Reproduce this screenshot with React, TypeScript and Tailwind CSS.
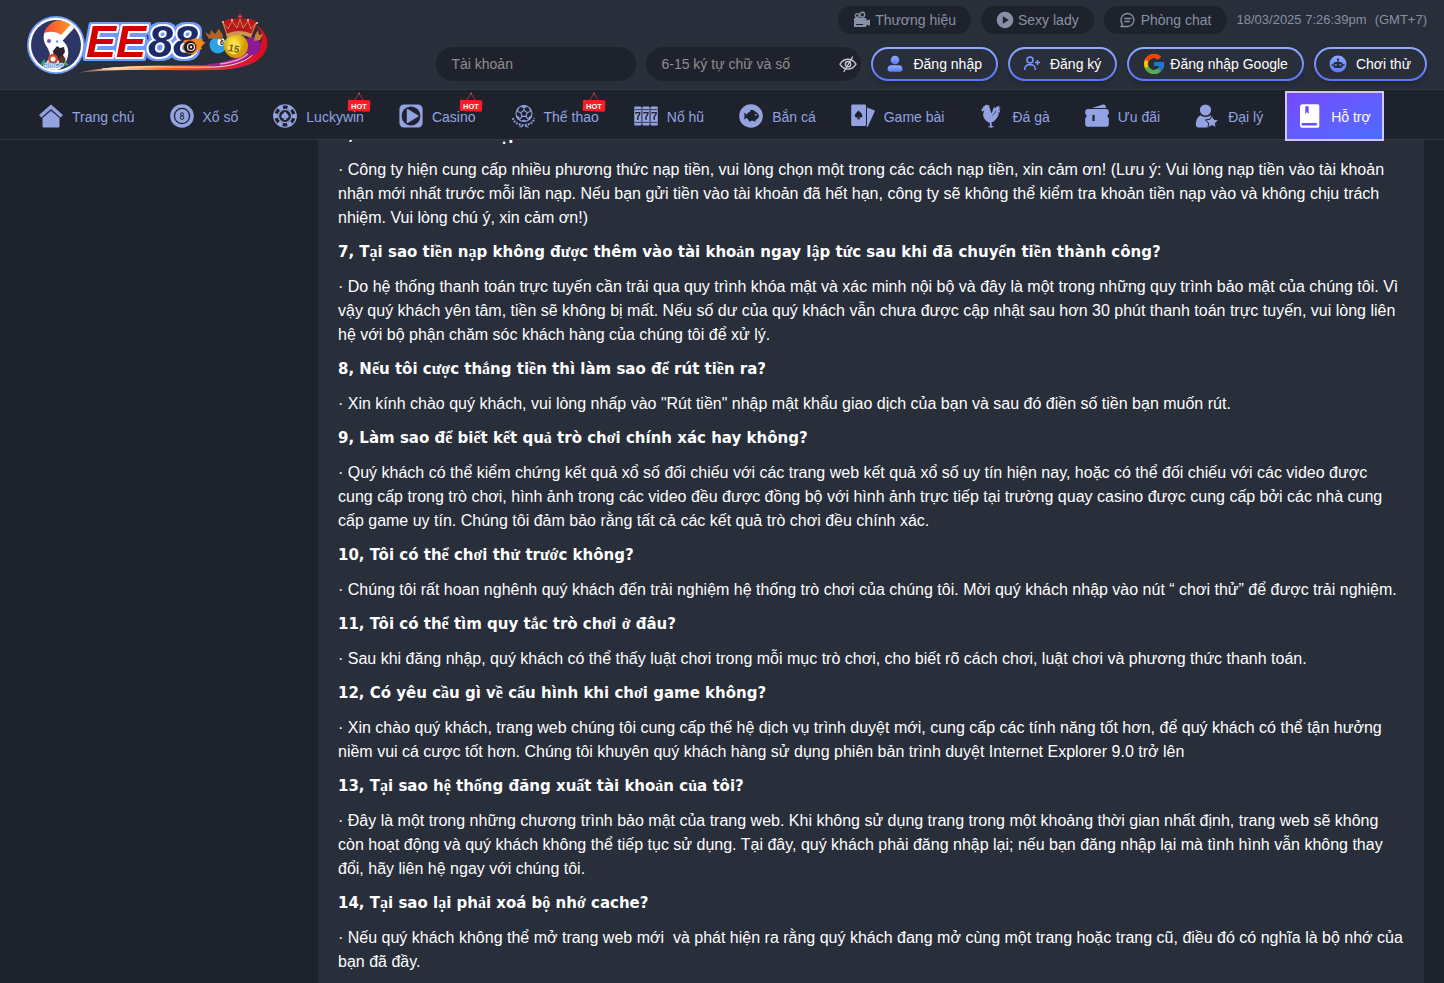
import React from "react";
import { FcGoogle } from "react-icons/fc";

type IconProps = { className?: string };

const HomeIcon = ({ className }: IconProps) => (
  <svg viewBox="0 0 24 24" className={className} fill="currentColor">
    <path d="M12 .8 23.6 11l-2 2.2L12 4.8l-9.6 8.4-2-2.2z" strokeLinejoin="round" stroke="currentColor" strokeWidth=".6" />
    <path d="M12 6.8 20.5 14v8.2a1.3 1.3 0 0 1-1.3 1.3H4.8a1.3 1.3 0 0 1-1.3-1.3V14z" />
  </svg>
);

const LotteryIcon = ({ className }: IconProps) => (
  <svg viewBox="0 0 24 24" className={className}>
    <circle cx="12" cy="12" r="11.8" fill="currentColor" />
    <circle cx="12" cy="12" r="7.6" fill="none" stroke="#1e222c" strokeWidth="1.3" />
    <circle cx="12" cy="10.3" r="1.5" fill="none" stroke="#1e222c" strokeWidth="1" />
    <circle cx="12" cy="13.6" r="1.8" fill="none" stroke="#1e222c" strokeWidth="1" />
  </svg>
);

const ChipIcon = ({ className }: IconProps) => (
  <svg viewBox="0 0 24 24" className={className}>
    <circle cx="12" cy="12" r="11.2" fill="#1e222c" stroke="currentColor" strokeWidth="1.2" />
    <circle cx="12" cy="12" r="9.4" fill="none" stroke="currentColor" strokeWidth="4.4" strokeDasharray="4.92 4.92" strokeDashoffset="2.46" />
    <circle cx="12" cy="12" r="6.6" fill="#1e222c" stroke="currentColor" strokeWidth="1.3" />
    <path d="M12 7.6c1.4 1.8 3.7 2.9 3.7 5a1.8 1.8 0 0 1-3 1.3l.7 2.1h-2.8l.7-2.1a1.8 1.8 0 0 1-3-1.3c0-2.1 2.3-3.2 3.7-5z" fill="currentColor" />
  </svg>
);

const CasinoIcon = ({ className }: IconProps) => (
  <svg viewBox="0 0 24 24" className={className}>
    <rect x=".4" y=".4" width="23.2" height="23.2" rx="4.5" fill="currentColor" />
    <circle cx="12" cy="12" r="9.4" fill="#1e222c" />
    <path d="M8.5 5.7 19 12 8.5 18.3z" fill="currentColor" stroke="currentColor" strokeWidth="1.4" strokeLinejoin="round" />
  </svg>
);

const SportIcon = ({ className }: IconProps) => (
  <svg viewBox="0 0 24 24" className={className} fill="none" stroke="currentColor" strokeWidth="1.1">
    <circle cx="13" cy="9.5" r="8" />
    <path d="m13 6.3 3.2 2.3-1.2 3.8h-4L9.8 8.6z" />
    <path d="M13 6.3V3.2M16.2 8.6l3.4-1.2M15 12.4l2.1 2.9M11 12.4l-2.1 2.9M9.8 8.6 6.4 7.4" />
    <path d="M9.5 2.6 13 3.8l3.500-1.200-2-.9h-3zM5.300 11.800l2.600 1.200.8 3.100-2-1.200zM20.700 11.800l-2.600 1.200-.8 3.100 2-1.200zM5.500 7.800l1.700-1.500.4-2.400M20.500 7.800l-1.700-1.500-.4-2.400M10.800 17l2.200-1 2.200 1" fill="currentColor" strokeWidth=".6" />
    <path d="M2 14c.8 4.200 4.400 6.600 11 7.200 6.300-.6 9.500-3 10.300-7.200" strokeWidth="2" strokeDasharray="1.8 1.2" />
    <path d="m8.500 23.300 3.500-1.200M17.500 23.300 14 22.100" />
  </svg>
);

const SlotIcon = ({ className }: IconProps) => (
  <svg viewBox="0 0 24 24" className={className}>
    {[0, 8.2, 16.4].map((x) => (
      <g key={x} transform={`translate(${x} 0)`}>
        <rect x=".2" y="2.6" width="7.2" height="18.8" rx="1" fill="currentColor" />
        <path d="M.6 5.6h6.4M.6 18.4h6.4" stroke="#1e222c" strokeWidth=".8" />
        <path d="M1.9 9.8V8.6h3.8v1.3l-1.9 3v3" fill="none" stroke="#1e222c" strokeWidth="1.4" />
      </g>
    ))}
  </svg>
);

const FishIcon = ({ className }: IconProps) => (
  <svg viewBox="0 0 24 24" className={className}>
    <circle cx="12" cy="12" r="11.8" fill="currentColor" />
    <path d="M4.6 8.6 7.8 10.400c.9-1.500 2.200-2.500 3.700-2.900l-.6-1.400c2.200-.5 4.600.1 5.600 1.700 1.700.8 3 2.300 3.600 4.200-.6 1.900-1.800 3.200-3.400 4l-.7 2-1.800-1.300-2 .1-1.300 1.300-1.400-2-1.700-2L4.600 15.600c.7-1.200 1-2.300 1-3.500s-.3-2.300-1-3.500z" fill="#1e222c" />
    <circle cx="16.8" cy="10.9" r=".9" fill="currentColor" />
  </svg>
);

const CardsIcon = ({ className }: IconProps) => (
  <svg viewBox="0 0 24 24" className={className}>
    <path d="M16 3.400 23.200 6.200a1 1 0 0 1 .5 1.300l-6.600 14.600a1 1 0 0 1-1.300.5l-.8-.4a1.600 1.600 0 0 0 1-1.500z" fill="currentColor" />
    <rect x=".2" y=".4" width="14.8" height="21.6" rx="1.3" fill="currentColor" />
    <path d="M7.600 6.600c1.400 1.900 3.800 2.900 3.800 5.100a1.900 1.900 0 0 1-3.200 1.300l.9 2.200h-3L7 13a1.900 1.900 0 0 1-3.200-1.300c0-2.200 2.400-3.200 3.800-5.100z" fill="#1e222c" />
  </svg>
);

const RoosterIcon = ({ className }: IconProps) => (
  <svg viewBox="0 0 24 24" className={className} fill="currentColor">
    <path transform="translate(1 0)" d="M3.200 4.200C2.600 2.600 3.700 1.700 4.800 2 5 .7 6.500.2 7.400 1.200c1.200-.6 2.300.4 1.900 1.600 1 2 .9 4.700 2.500 6.500 1-2.100.9-4.900 2.900-6.800-.2 1-.1 1.700.1 2.200C15.900 2.700 17.700 1.800 20 2c-.8.4-1.300.9-1.600 1.500 1 0 1.900.6 2.400 1.600-.7-.2-1.300-.2-1.800.1.800.9 1.200 2.200.9 3.700-.4-.7-.8-1-1.300-1.200.3 2.600-.7 5.500-2.600 7.300-1.200 1.900-2.800 3.100-4.500 3.600l.3 3.500 2.200.7v.5l-2.300-.1-.2.7h-.7l-.1-.7-2.700.1v-.5l2.100-.7-.4-3.300-.5-.1c-3.600-1.600-6-4.800-6.100-8.200.1-1.700 1-2.800 1.100-4l-1.800 1.300c-.8-.4-1-1.300-.5-2.200L.8 4.900z" />
    <path d="M13.500 11.500c1.500-1 2.600-2.600 3.300-4.600" fill="none" stroke="#1e222c" strokeWidth=".7" />
  </svg>
);

const WalletIcon = ({ className }: IconProps) => (
  <svg viewBox="0 0 24 24" className={className}>
    <path d="M7 4 18 .6a2 2 0 0 1 2.500 1.200l.7 2.200z" fill="currentColor" />
    <path d="M3 4.900h18a2.800 2.800 0 0 1 2.800 2.800v2.400a2 2 0 0 0 0 3.800v6a2.800 2.800 0 0 1-2.800 2.800H3A2.800 2.800 0 0 1 .2 19.900v-6a2 2 0 0 0 0-3.800V7.700A2.800 2.800 0 0 1 3 4.900z" fill="currentColor" />
    <path d="M8.500 11v6" stroke="#1e222c" strokeWidth="2.2" />
  </svg>
);

const AgentIcon = ({ className }: IconProps) => (
  <svg viewBox="0 0 24 24" className={className} fill="currentColor">
    <circle cx="10.5" cy="6" r="5.6" />
    <path d="M5.500 11.300c1.300 1 3.100 1.600 5 1.600s3.700-.6 5-1.600c1 .6 1.900 1.300 2.500 2.300l-.7 1.200-3.700.8-1.600 2 2 2.300-.5 3.600h-10C1.800 23.500.8 22.200.8 20.500c0-4.200 1.700-7.400 4.700-9.200z" />
    <path d="m17 11.300 2 4 4.600.7-3.300 3.200.8 4.500-4.100-2.100-4.100 2.100.8-4.500-3.300-3.200 4.600-.7z" stroke="#1e222c" strokeWidth="1" />
  </svg>
);

const BookIcon = ({ className }: IconProps) => (
  <svg viewBox="0 0 24 24" className={className}>
    <path d="M4.500.3h15.300a1.500 1.500 0 0 1 1.500 1.500v20.400a1.500 1.500 0 0 1-1.500 1.500H4.500A2.500 2.500 0 0 1 2 21.200V2.800A2.500 2.500 0 0 1 4.500.3z" fill="currentColor" />
    <path d="M4.500 19h14.300v2.600H5a1.300 1.300 0 0 1-.5-2.600z" fill="#6a4dff" />
    <path d="M7.300 2.300h3.400v7.500L9 8.300 7.300 9.800z" fill="#6a4dff" />
  </svg>
);

const HotTag = () => (
  <svg viewBox="0 0 24 20" className="absolute -top-[13px] -right-[7px] w-6 h-5">
    <path d="M7.500 8.500 12 1.500l4.500 7" fill="none" stroke="#a83242" strokeWidth=".9" />
    <circle cx="12" cy="1.5" r="1" fill="#e0404c" />
    <rect x=".8" y="8" width="22.4" height="11.3" rx="1.5" fill="#fb1d23" transform="rotate(2 12 14)" />
    <text x="12" y="16.5" textAnchor="middle" fontFamily="Liberation Sans, sans-serif" fontWeight="700" fontSize="7.5" fill="#fff">HOT</text>
  </svg>
);

const CameraIcon = ({ className }: IconProps) => (
  <svg viewBox="0 0 18 18" className={className}>
    <g fill="none" stroke="currentColor" strokeWidth="1.4">
      <circle cx="4.3" cy="4.5" r="1.9" />
      <circle cx="9.3" cy="3.7" r="2.4" />
    </g>
    <path d="M1 7h11.500a1 1 0 0 1 1 1v1.500l3.500-1v6.200l-3.500-1V15a1 1 0 0 1-1 1H1z" fill="currentColor" />
    <path d="M3 13.500h7" stroke="#1e222c" strokeWidth="1" />
  </svg>
);

const PlayIcon = ({ className }: IconProps) => (
  <svg viewBox="0 0 18 18" className={className}>
    <circle cx="9" cy="9" r="8.3" fill="currentColor" />
    <path d="M6.800 5.200 12.800 9l-6 3.800z" fill="#1e222c" />
  </svg>
);

const ChatIcon = ({ className }: IconProps) => (
  <svg viewBox="0 0 18 18" className={className} fill="none" stroke="currentColor" strokeWidth="1.4" strokeLinecap="round">
    <path d="M2 15.500h6.700A6.500 6.500 0 1 0 3.300 13c.1.9-.4 1.800-1.300 2.500z" strokeLinejoin="round" />
    <path d="M5.800 7.500h6M5.800 10.500h4.500" />
  </svg>
);

const EyeOffIcon = ({ className }: IconProps) => (
  <svg viewBox="0 0 18 18" className={className} fill="none" stroke="currentColor" strokeWidth="1.4" strokeLinecap="round">
    <path d="M1 9.200C3 6 5.800 4.300 9 4.300s6 1.700 8 4.900c-2 3.200-4.800 4.900-8 4.900S3 12.400 1 9.200z" />
    <circle cx="9" cy="9.2" r="2.7" />
    <path d="M13.500 2 5 16.500" />
  </svg>
);

const Gradient = ({ id }: { id: string }) => (
  <linearGradient id={id} x1="0" y1="0" x2="0" y2="1">
    <stop offset="0" stopColor="#8eaaff" />
    <stop offset="1" stopColor="#5c7cfc" />
  </linearGradient>
);

const UserIcon = ({ className }: IconProps) => (
  <svg viewBox="0 0 18 18" className={className} fill="url(#user)">
    <defs><Gradient id="user" /></defs>
    <circle cx="9" cy="5" r="4.3" />
    <path d="M5.500 10.300h7c2.600 0 4 1.700 4 3.700 0 1.700-1 2.800-2.700 2.800H4.200c-1.700 0-2.700-1.100-2.700-2.800 0-2 1.400-3.700 4-3.700z" />
  </svg>
);

const UserPlusIcon = ({ className }: IconProps) => (
  <svg viewBox="0 0 18 18" className={className} fill="none" stroke="#7c97ff" strokeWidth="1.5">
    <circle cx="7" cy="5" r="3" />
    <path d="M1.800 15v-1.200a4 4 0 0 1 4-4h2.400a4 4 0 0 1 4 4V15M14.500 5v5M12 7.500h5" />
  </svg>
);

const RobotIcon = ({ className }: IconProps) => (
  <svg viewBox="0 0 18 18" className={className}>
    <defs><Gradient id="robot" /></defs>
    <circle cx="9" cy="9" r="8.5" fill="url(#robot)" />
    <rect x="4.3" y="7" width="9.4" height="6" rx="2.5" fill="#262c3c" />
    <path d="M9 4v3M3.200 9v2M14.800 9v2" stroke="#262c3c" strokeWidth="1.2" />
    <circle cx="9" cy="4.3" r="1" fill="#262c3c" />
    <circle cx="6.9" cy="9.8" r=".9" fill="#83a0ff" />
    <circle cx="11.1" cy="9.8" r=".9" fill="#83a0ff" />
  </svg>
);

const Logo = () => (
  <svg viewBox="0 0 250 66" className="w-[250px] h-[66px]" role="img" aria-label="EE88">
    <defs>
      <linearGradient id="hair" x1="0" x2="1">
        <stop offset="0" stopColor="#f4463c" />
        <stop offset="1" stopColor="#ffa51c" />
      </linearGradient>
      <linearGradient id="swoosh" x1="0" x2="1">
        <stop offset="0" stopColor="#7a2a28" />
        <stop offset=".2" stopColor="#ffd9b0" />
        <stop offset=".5" stopColor="#f85a1c" />
        <stop offset=".85" stopColor="#d51a4a" />
        <stop offset="1" stopColor="#e00d12" />
      </linearGradient>
      <radialGradient id="gold" cx=".4" cy=".35">
        <stop offset="0" stopColor="#fff04a" />
        <stop offset="1" stopColor="#d69a00" />
      </radialGradient>
      <clipPath id="disc"><circle cx="34" cy="33" r="25" /></clipPath>
      <filter id="outline" x="-10%" y="-20%" width="120%" height="140%">
        <feMorphology in="SourceAlpha" operator="dilate" radius="1.5" result="spread" />
        <feGaussianBlur in="spread" stdDeviation=".5" result="soft" />
        <feFlood floodColor="#6d9bff" />
        <feComposite in2="soft" operator="in" result="halo" />
        <feMerge>
          <feMergeNode in="halo" />
          <feMergeNode in="SourceGraphic" />
        </feMerge>
      </filter>
    </defs>

    {/* swoosh */}
    <path d="M54 61C95 52 140 54 190 53c26 0 45-8 49-21 2-8 0-14-6-20 9 6 14 14 12 23-4 15-22 23-55 23C140 59 95 56 54 61z" fill="url(#swoosh)" />
    <path d="M185 52c22-1 38-8 42-21l9-4c1 15-16 27-46 28z" fill="#a3208a" />
    <path d="M80 57c35-4 78-1 112-2 24-1 40-8 45-22" fill="none" stroke="#ffe3b8" strokeWidth="1" />
    <path d="M198 52c18-2 30-9 34-19" fill="none" stroke="#f49ac9" strokeWidth="1.5" />

    {/* mascot disc */}
    <circle cx="34" cy="33" r="29" fill="#6d9bff" />
    <circle cx="34" cy="33" r="27.3" fill="#fff" />
    <g clipPath="url(#disc)">
      <rect x="8" y="6" width="54" height="54" fill="#2d3566" />
      <path d="M22 22C25 11 37 6 55 9L40 28c5 4 7 9 6 15-1 9-8 16-17 18l-14-2c5-4 10-8 12-13 2-4 0-7-2-11-3-4-4-8-3-13z" fill="#fff" />
      <path d="M22 21C26 10 37 5 53 8L39 23c-5-4-11-4-17-2z" fill="url(#hair)" />
      <path d="M57 9 36 32" stroke="#fff" strokeWidth="2.5" />
      <circle cx="27" cy="29" r="2" fill="#7549b8" />
      <circle cx="35" cy="29.5" r="1.2" fill="#45a9e8" />
      <path d="M31 39l4-5 3 2 4-1 1 5-2 3 2 4-5 2-6-3z" fill="#2b2230" />
      <circle cx="31" cy="47" r="5" fill="#d4442c" />
      <circle cx="31" cy="47" r="2.5" fill="#fff" />
      <circle cx="40" cy="48" r="3.5" fill="#5d321e" />
      <path d="M18 53l4-6 3 6zM43 49l4 4-5 1z" fill="#39a657" />
    </g>
    <text x="32" y="55" textAnchor="middle" fontFamily="Liberation Sans, sans-serif" fontWeight="700" fontSize="6" fill="#e9f4ff" stroke="#3f7ec4" strokeWidth="1.2" paintOrder="stroke">BINGO</text>

    {/* wordmark */}
    <g fontFamily="Liberation Sans, Arial, sans-serif" fontWeight="700" fontStyle="italic" fontSize="45" strokeLinejoin="round" strokeWidth="4" stroke="#fff" paintOrder="stroke" filter="url(#outline)">
      <text x="64" y="45" fill="#d20600">EE</text>
      <text x="126" y="45" fill="#1d2c6b">88</text>
    </g>

    {/* flaming ball */}
    <g transform="translate(-1 -4)">
      <path d="M162 33c6-3 10 1 14-4-1 4 4 2 6 1-2 3 1 4 3 5-3 0-3 3-5 4 1 1 1 2 0 3-4-2-4 4-9 5z" fill="#f3861c" />
      <circle cx="169" cy="39" r="6.5" fill="#20191a" stroke="#c96b22" strokeWidth="1" />
      <circle cx="170" cy="39" r="3.5" fill="none" stroke="#f3e9df" strokeWidth="1.2" />
      <circle cx="170" cy="39" r="1.2" fill="#f3e9df" />
    </g>

    {/* crowned balls */}
    <circle cx="230" cy="34" r="9" fill="#8b1996" />
    <circle cx="196" cy="33" r="8.5" fill="#2aa4e6" />
    <ellipse cx="199" cy="30" rx="3.5" ry="4" fill="#fff" />
    <text x="200" y="33" textAnchor="middle" fontFamily="Liberation Sans, sans-serif" fontWeight="700" fontSize="7" fill="#222">6</text>
    <path d="M183 20l5 3 1-5 4 4 4-5 4 6-1 5c-5-2-9-2-13-1z" fill="#b26328" />
    <path d="M233 23l3-5 1 5 4-1-3 6-6 1z" fill="#c5812e" />
    <circle cx="214" cy="34" r="12" fill="url(#gold)" />
    <circle cx="212" cy="36" r="6.5" fill="#fbdf5a" />
    <text x="212" y="40" textAnchor="middle" fontFamily="Liberation Sans, sans-serif" fontWeight="700" fontSize="10" fill="#7a5a00" transform="rotate(12 212 36)">15</text>
    <g transform="translate(-2 0)">
      <path d="M203 12c1-6 10-6 17-5 7-1 15-1 17 5l-5 12c-8-3-17-3-25 0z" fill="#b81620" />
      <path d="M203 11l5 6 4-8 5 7 3-9 3 9 5-7 3 8 5-6-5 12c-8-3-16-3-24 0z" fill="none" stroke="#c98a4a" strokeWidth="1" />
      <path d="M206 22c9-4 17-4 26 0l-1 4c-8-4-16-4-24 0z" fill="#cf9450" />
      <path d="M220 2v6M217.500 4.500h5" stroke="#d8323a" strokeWidth="1.6" />
      <g fill="#f6dca0">
        <circle cx="203" cy="10" r="1" />
        <circle cx="212" cy="8" r="1" />
        <circle cx="228" cy="8" r="1" />
        <circle cx="237" cy="11" r="1" />
      </g>
    </g>
  </svg>
);

const navItems: { label: string; icon: React.FC<IconProps>; hot?: boolean; active?: boolean }[] = [
  { label: "Trang chủ", icon: HomeIcon },
  { label: "Xổ số", icon: LotteryIcon },
  { label: "Luckywin", icon: ChipIcon, hot: true },
  { label: "Casino", icon: CasinoIcon, hot: true },
  { label: "Thể thao", icon: SportIcon, hot: true },
  { label: "Nổ hũ", icon: SlotIcon },
  { label: "Bắn cá", icon: FishIcon },
  { label: "Game bài", icon: CardsIcon },
  { label: "Đá gà", icon: RoosterIcon },
  { label: "Ưu đãi", icon: WalletIcon },
  { label: "Đại lý", icon: AgentIcon },
  { label: "Hỗ trợ", icon: BookIcon, active: true },
];

const questions = [
  {
    q: "6, Làm thế nào để nạp tiền vào tài khoản?",
    a: "· Công ty hiện cung cấp nhiều phương thức nạp tiền, vui lòng chọn một trong các cách nạp tiền, xin cảm ơn! (Lưu ý: Vui lòng nạp tiền vào tài khoản nhận mới nhất trước mỗi lần nạp. Nếu bạn gửi tiền vào tài khoản đã hết hạn, công ty sẽ không thể kiểm tra khoản tiền nạp vào và không chịu trách nhiệm. Vui lòng chú ý, xin cảm ơn!)",
  },
  {
    q: "7, Tại sao tiền nạp không được thêm vào tài khoản ngay lập tức sau khi đã chuyển tiền thành công?",
    a: "· Do hệ thống thanh toán trực tuyến cần trải qua quy trình khóa mật và xác minh nội bộ và đây là một trong những quy trình bảo mật của chúng tôi. Vì vậy quý khách yên tâm, tiền sẽ không bị mất. Nếu số dư của quý khách vẫn chưa được cập nhật sau hơn 30 phút thanh toán trực tuyến, vui lòng liên hệ với bộ phận chăm sóc khách hàng của chúng tôi để xử lý.",
  },
  {
    q: "8, Nếu tôi cược thắng tiền thì làm sao để rút tiền ra?",
    a: "· Xin kính chào quý khách, vui lòng nhấp vào \"Rút tiền\" nhập mật khẩu giao dịch của bạn và sau đó điền số tiền bạn muốn rút.",
  },
  {
    q: "9, Làm sao để biết kết quả trò chơi chính xác hay không?",
    a: "· Quý khách có thể kiểm chứng kết quả xổ số đối chiếu với các trang web kết quả xổ số uy tín hiện nay, hoặc có thể đối chiếu với các video được cung cấp trong trò chơi, hình ảnh trong các video đều được đồng bộ với hình ảnh trực tiếp tại trường quay casino được cung cấp bởi các nhà cung cấp game uy tín. Chúng tôi đảm bảo rằng tất cả các kết quả trò chơi đều chính xác.",
  },
  {
    q: "10, Tôi có thể chơi thử trước không?",
    a: "· Chúng tôi rất hoan nghênh quý khách đến trải nghiệm hệ thống trò chơi của chúng tôi. Mời quý khách nhập vào nút “ chơi thử” để được trải nghiệm.",
  },
  {
    q: "11, Tôi có thể tìm quy tắc trò chơi ở đâu?",
    a: "· Sau khi đăng nhập, quý khách có thể thấy luật chơi trong mỗi mục trò chơi, cho biết rõ cách chơi, luật chơi và phương thức thanh toán.",
  },
  {
    q: "12, Có yêu cầu gì về cấu hình khi chơi game không?",
    a: "· Xin chào quý khách, trang web chúng tôi cung cấp thế hệ dịch vụ trình duyệt mới, cung cấp các tính năng tốt hơn, để quý khách có thể tận hưởng niềm vui cá cược tốt hơn. Chúng tôi khuyên quý khách hàng sử dụng phiên bản trình duyệt Internet Explorer 9.0 trở lên",
  },
  {
    q: "13, Tại sao hệ thống đăng xuất tài khoản của tôi?",
    a: "· Đây là một trong những chương trình bảo mật của trang web. Khi không sử dụng trang trong một khoảng thời gian nhất định, trang web sẽ không còn hoạt động và quý khách không thể tiếp tục sử dụng. Tại đây, quý khách phải đăng nhập lại; nếu bạn đăng nhập lại mà tình hình vẫn không thay đổi, hãy liên hệ ngay với chúng tôi.",
  },
  {
    q: "14, Tại sao lại phải xoá bộ nhớ cache?",
    a: "· Nếu quý khách không thể mở trang web mới  và phát hiện ra rằng quý khách đang mở cùng một trang hoặc trang cũ, điều đó có nghĩa là bộ nhớ của bạn đã đầy.",
  },
];

// Vietnamese letters outside Latin-1 are set in the serif face
const HeadingText: React.FC<{ text: string }> = ({ text }) => (
  <>
    {text.split(/([\u01a0-\u01b0\u1ea0-\u1ef9]+)/).map((part, i) =>
      i % 2 ? (
        <span key={i} className="font-['Liberation_Serif',serif] text-base leading-none font-bold">{part}</span>
      ) : (
        part
      )
    )}
  </>
);

const Pill: React.FC<{ icon: React.ReactNode; children: React.ReactNode }> = ({ icon, children }) => (
  <button type="button" className="flex items-center gap-1 h-7 px-[15px] rounded-full bg-[#1e222c] text-[#8790a5]">
    {icon}
    {children}
  </button>
);

const GradientButton: React.FC<{ icon: React.ReactNode; children: React.ReactNode; className?: string }> = ({ icon, children, className }) => (
  <button
    type="button"
    className={`flex items-center h-[34px] pl-[13px] pr-[14px] rounded-full border-2 border-transparent text-white shadow-md [background:linear-gradient(#282e3a,#282e3a)_padding-box,linear-gradient(#93adff,#5875fb)_border-box] ${className}`}
  >
    {icon}
    {children}
  </button>
);

export default function App() {
  return (
    <div className="h-screen flex flex-col overflow-hidden bg-[#1e222c] text-sm font-['Liberation_Sans',Arial,sans-serif]">
      <header className="relative z-10 shrink-0">
        <div className="flex items-start justify-between h-[89px] pl-[22px] pr-[17px] bg-[#282e3a]">
          <a href="#home" className="mt-3">
            <Logo />
          </a>
          <div className="flex flex-col items-end gap-[13px] pt-[6px]">
            <div className="flex items-center gap-[10px]">
              <Pill icon={<CameraIcon className="size-[18px]" />}>Thương hiệu</Pill>
              <Pill icon={<PlayIcon className="size-[18px]" />}>Sexy lady</Pill>
              <Pill icon={<ChatIcon className="size-[18px]" />}>Phòng chat</Pill>
              <div className="flex gap-2 text-[13px] text-[#8790a5]">
                <span>18/03/2025 7:26:39pm</span>
                <span>(GMT+7)</span>
              </div>
            </div>
            <form className="flex items-center gap-[10px]">
              <input
                type="text"
                aria-label="Tài khoản"
                placeholder="Tài khoản"
                className="w-[200px] h-[34px] px-[15px] rounded-full bg-[#1e222c] text-white placeholder:text-[#8e8e90] outline-none"
              />
              <div className="flex items-center w-[215px] h-[34px] pl-[15px] pr-1 rounded-full bg-[#1e222c]">
                <input
                  type="password"
                  aria-label="Mật khẩu"
                  placeholder="6-15 ký tự chữ và số"
                  className="flex-1 min-w-0 bg-transparent text-white placeholder:text-[#8e8e90] outline-none"
                />
                <button type="button" aria-label="Hiện mật khẩu" className="text-[#c3c5ca]">
                  <EyeOffIcon className="size-[18px]" />
                </button>
              </div>
              <GradientButton className="gap-[9px]" icon={<UserIcon className="size-[18px]" />}>Đăng nhập</GradientButton>
              <GradientButton className="gap-[9px]" icon={<UserPlusIcon className="size-[18px]" />}>Đăng ký</GradientButton>
              <GradientButton className="gap-1" icon={<FcGoogle className="size-6" />}>Đăng nhập Google</GradientButton>
              <GradientButton className="gap-[9px]" icon={<RobotIcon className="size-[18px]" />}>Chơi thử</GradientButton>
            </form>
          </div>
        </div>
        <nav className="h-[51px] pl-[26px] bg-[#1e222c] border-y border-[#343843]">
          <ul className="flex items-center gap-[9px] pt-px">
            {navItems.map(({ label, icon: Icon, hot, active }) => (
              <li key={label}>
                <a
                  href="#"
                  className={`flex items-center gap-[9px] h-[50px] px-[11px] border-2 whitespace-nowrap ${
                    active ? "border-[#cfc8ff] bg-linear-to-br from-[#7548ff] to-[#4a6dff] text-white" : "border-transparent text-[#93a2e0]"
                  }`}
                >
                  <Icon className="size-6" />
                  <span className="relative pt-0.5">
                    {label}
                    {hot && <HotTag />}
                  </span>
                </a>
              </li>
            ))}
          </ul>
        </nav>
      </header>

      <main className="flex-1 min-h-0 overflow-hidden pl-[318px] pr-5">
        <article className="-mt-[17px] flex flex-col gap-[10px] px-5 pb-5 bg-[#282e3a] text-base leading-6 text-white">
          {questions.map(({ q, a }) => (
            <React.Fragment key={q}>
              <h3 className="text-[15px] leading-[25px] font-bold font-['DejaVu_Sans',sans-serif]">
                <HeadingText text={q} />
              </h3>
              <p className="whitespace-pre-wrap">{a}</p>
            </React.Fragment>
          ))}
        </article>
      </main>
    </div>
  );
}
